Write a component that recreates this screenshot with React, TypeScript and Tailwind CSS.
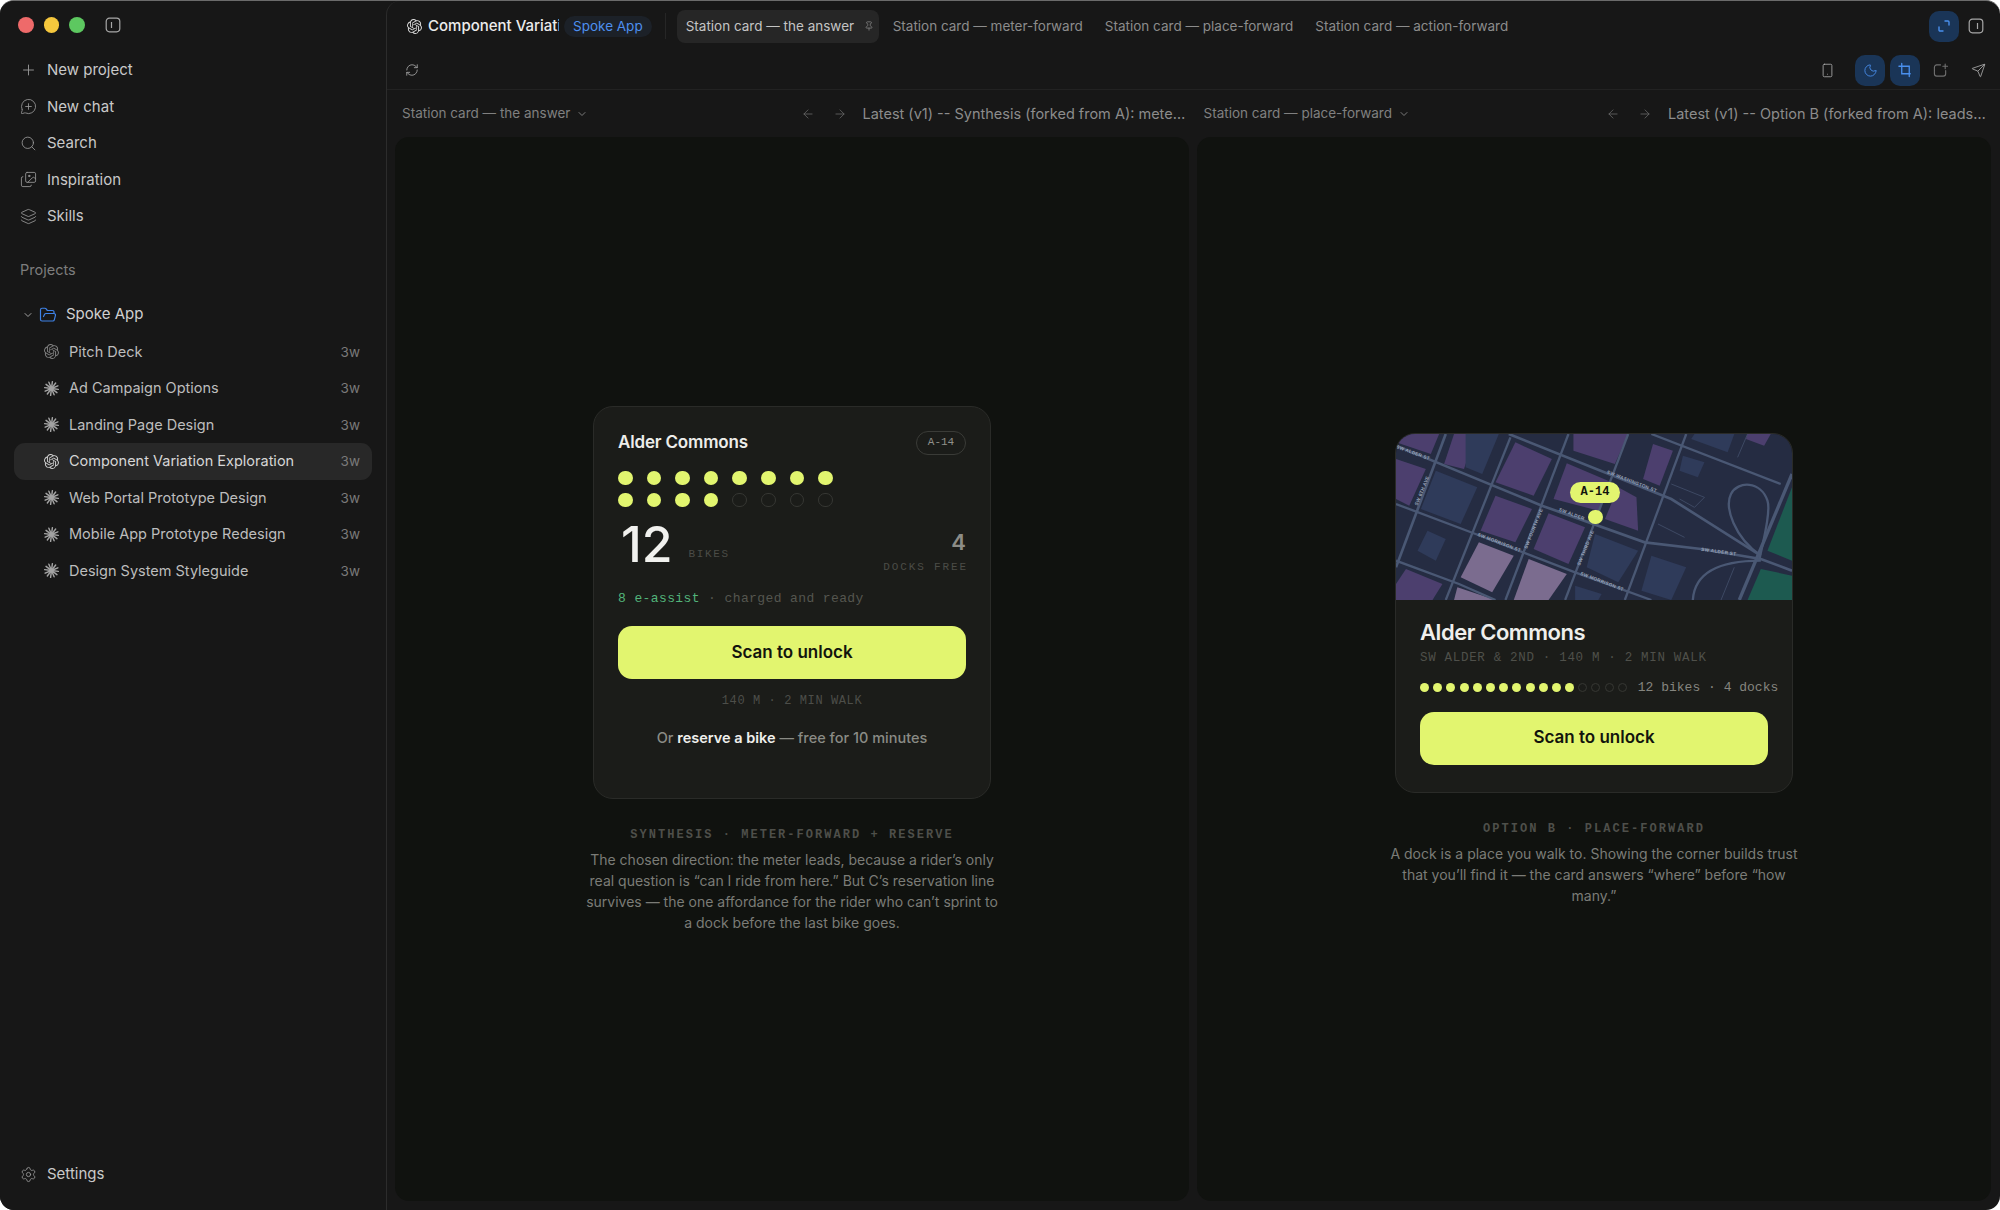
import React from "react";
import { Plus, MessageCirclePlus, Search, Settings, ChevronDown, FolderOpen, ArrowLeft, ArrowRight, RefreshCw, Pin, Smartphone, Moon, Send, Images, Layers } from "lucide-react";
import { SiOpenai } from "react-icons/si";

const Burst = () => (
  <svg width="15" height="15" viewBox="0 0 24 24" stroke="#a3a3a3" strokeWidth="2.3" strokeLinecap="round" className="shrink-0">
    {Array.from({ length: 12 }).map((_, i) => {
      const a = (i * Math.PI) / 6 + 0.13;
      return <line key={i} x1={12 + 3 * Math.cos(a)} y1={12 + 3 * Math.sin(a)} x2={12 + 11 * Math.cos(a)} y2={12 + 11 * Math.sin(a)} />;
    })}
    <circle cx="12" cy="12" r="3.5" fill="#a3a3a3" stroke="none" />
  </svg>
);

const PanelIcon = ({ right = false }: { right?: boolean }) => (
  <svg width="16" height="16" viewBox="0 0 16 16" fill="none" stroke="#a8a8a8" strokeWidth="1.2" className="shrink-0">
    <rect x="1.2" y="1.2" width="13.6" height="13.6" rx="3.2" />
    <line x1={right ? 9.5 : 6.5} y1="5" x2={right ? 9.5 : 6.5} y2="11" />
  </svg>
);

const top = [
  { label: "New project", icon: <Plus size={18} strokeWidth={1.3} /> },
  { label: "New chat", icon: <MessageCirclePlus size={17} strokeWidth={1.2} /> },
  { label: "Search", icon: <Search size={17} strokeWidth={1.2} /> },
  { label: "Inspiration", icon: <Images size={17} strokeWidth={1.2} /> },
  { label: "Skills", icon: <Layers size={17} strokeWidth={1.2} /> },
];

const projects = [
  ["Pitch Deck", "o"],
  ["Ad Campaign Options", "b"],
  ["Landing Page Design", "b"],
  ["Component Variation Exploration", "a"],
  ["Web Portal Prototype Design", "b"],
  ["Mobile App Prototype Redesign", "b"],
  ["Design System Styleguide", "b"],
];

const Sidebar = () => (
  <aside className="w-[386px] shrink-0 h-full flex flex-col bg-[#171717] text-[15px]">
    <div className="h-[48px] flex items-center pl-[18px] shrink-0">
      <span className="w-[15.5px] h-[15.5px] rounded-full bg-[#ee6a6a]" />
      <span className="w-[15.5px] h-[15.5px] rounded-full bg-[#f5c73d] ml-[10px]" />
      <span className="w-[15.5px] h-[15.5px] rounded-full bg-[#5dc860] ml-[10px]" />
      <span className="ml-[20px]"><PanelIcon /></span>
    </div>
    <nav className="flex flex-col pt-[3px] pl-[20px]">
      {top.map((t) => (
        <div key={t.label} className="h-[36.5px] flex items-center gap-[10px] text-[#c9c9c9]">
          <span className="w-[17px] flex justify-center text-[#9a9a9a]">{t.icon}</span>
          <span>{t.label}</span>
        </div>
      ))}
    </nav>
    <div className="pl-[20px] mt-[25px] h-[20px] flex items-center text-[14.5px] text-[#7d7d7d]">Projects</div>
    <div className="flex items-center h-[36px] mt-[17px] pl-[22px] text-[#d0d0d0]">
      <ChevronDown size={12} className="text-[#a0a0a0]" />
      <FolderOpen size={18} strokeWidth={1.6} className="text-[#3f82e6] ml-[5px]" />
      <span className="ml-[9px]">Spoke App</span>
    </div>
    <div className="flex flex-col px-[14px] mt-[1px]">
      {projects.map(([name, kind]) => (
        <div key={name} className={`h-[36.5px] flex items-center rounded-[11px] pl-[30px] pr-[12px] ${kind === "a" ? "bg-[#282828] text-[#d6d6d6]" : "text-[#bdbdbd]"}`}>
          <span className="w-[15px] shrink-0 flex justify-center">
            {kind === "b" ? <Burst /> : <SiOpenai size={15} className={kind === "a" ? "text-[#cfcfcf]" : "text-[#7f7f7f]"} />}
          </span>
          <span className="ml-[10px] flex-1 text-[14.5px] truncate">{name}</span>
          <span className="text-[13.5px] text-[#7a7a7a]">3w</span>
        </div>
      ))}
    </div>
    <div className="mt-auto pl-[20px] pb-[18px]">
      <div className="h-[36px] flex items-center gap-[10px] text-[#c9c9c9]">
        <Settings size={17} strokeWidth={1.2} className="text-[#9a9a9a]" />
        <span>Settings</span>
      </div>
    </div>
  </aside>
);

const ToolBtn = ({ children, on = false }: { children: React.ReactNode; on?: boolean }) => (
  <span className={`h-[31px] w-[30px] rounded-[10px] flex items-center justify-center ${on ? "bg-[#1a3557] text-[#4a90ee]" : "text-[#a0a0a0]"}`}>{children}</span>
);

const TabBar = () => (
  <div className="h-[50px] shrink-0 flex items-center pl-[20px] pr-[16px]">
    <SiOpenai size={15} className="text-[#d8d8d8] shrink-0" />
    <span className="ml-[6px] w-[131px] overflow-hidden whitespace-nowrap text-[15px] font-medium text-[#ececec]">Component Variation Exploration</span>
    <span className="ml-[5px] h-[21px] px-[9px] rounded-full bg-[#1c2128] text-[#4d8fee] text-[13.5px] flex items-center">Spoke App</span>
    <span className="ml-[13px] w-px h-[26px] bg-[#262626]" />
    <div className="ml-[11px] h-[33px] w-[202px] rounded-[8px] bg-[#262626] flex items-center pl-[9px] text-[13.5px] text-[#c4c4c4]">
      <span>Station card — the answer</span>
      <Pin size={10} className="ml-[10px] text-[#7f7f7f]" />
    </div>
    <span className="ml-[14px] text-[13.5px] text-[#8c8c8c]">Station card — meter-forward</span>
    <span className="ml-[22px] text-[13.5px] text-[#8c8c8c]">Station card — place-forward</span>
    <span className="ml-[22px] text-[13.5px] text-[#8c8c8c]">Station card — action-forward</span>
    <div className="ml-auto flex items-center gap-[9px]">
      <ToolBtn on>
        <svg width="14" height="14" viewBox="0 0 14 14" fill="none" stroke="currentColor" strokeWidth="1.4" strokeLinecap="round"><path d="M8 2h3a1 1 0 0 1 1 1v3" /><path d="M6 12H3a1 1 0 0 1-1-1V8" /></svg>
      </ToolBtn>
      <PanelIcon right />
    </div>
  </div>
);

const Toolbar = () => (
  <div className="h-[39px] shrink-0 flex items-center pl-[18px] pr-[14px] border-b border-[#222222]">
    <RefreshCw size={14} strokeWidth={1.4} className="text-[#aaaaaa]" />
    <div className="ml-auto flex items-center gap-[5px]">
      <span className="mr-[15px]"><Smartphone size={15} strokeWidth={1.3} className="text-[#b0b0b0]" /></span>
      <ToolBtn on><Moon size={15} strokeWidth={1.4} /></ToolBtn>
      <ToolBtn on>
        <svg width="15" height="16" viewBox="0 0 16 16" fill="none" stroke="currentColor" strokeWidth="1.4" strokeLinecap="round"><path d="M4 1v11h9" /><path d="M1 4h11v11" /></svg>
      </ToolBtn>
      <span className="w-[30px] flex justify-center text-[#6f6f6f]">
        <svg width="15" height="15" viewBox="0 0 16 16" fill="none" stroke="currentColor" strokeWidth="1.2" strokeLinecap="round"><path d="M8 2H4a2.5 2.5 0 0 0-2.5 2.5v7A2.5 2.5 0 0 0 4 14h7a2.5 2.5 0 0 0 2.5-2.5V8" /><path d="M13 1v5M10.5 3.5h5" /></svg>
      </span>
      <span className="w-[26px] flex justify-end text-[#b0b0b0]">
        <Send size={15} strokeWidth={1.3} />
      </span>
    </div>
  </div>
);

const PanelHead = ({ name, latest, wide }: { name: string; latest: string; wide: string }) => (
  <div className="flex items-center min-w-0 text-[13.5px] text-[#808080]">
    <span className="whitespace-nowrap">{name}</span>
    <ChevronDown size={12} className="ml-[6px] text-[#7a7a7a]" />
    <ArrowLeft size={14} strokeWidth={1.3} className="ml-auto text-[#6c6c6c]" />
    <ArrowRight size={14} strokeWidth={1.3} className="ml-[18px] text-[#6c6c6c]" />
    <span className={`ml-[16px] truncate text-[14.5px] text-[#8c8c8c] ${wide}`}>{latest}</span>
  </div>
);

const mono = "font-['Liberation_Mono',monospace]";
const lime = "bg-[#e2f56f]";

const Dot = ({ on, size }: { on: boolean; size: string }) =>
  <span className={`${size} rounded-full shrink-0 ${on ? lime : "border border-[#363733]"}`} />;

const Cta = () => (
  <div className={`h-[53px] rounded-[14px] ${lime} flex items-center justify-center text-[17px] font-semibold text-[#12140d]`}>Scan to unlock</div>
);

const CardOne = () => (
  <div className="w-[398px] h-[393px] rounded-[20px] bg-[#1b1c19] border border-[#2a2b28] px-[24px] pt-[24px] flex flex-col">
    <div className="flex items-center justify-between h-[24px]">
      <span className="text-[17px] font-semibold text-[#ededea] tracking-[-0.01em]">Alder Commons</span>
      <span className={`${mono} h-[24px] w-[50px] rounded-full border border-[#3a3b37] text-[11px] text-[#90908a] flex items-center justify-center`}>A-14</span>
    </div>
    <div className="mt-[16px] grid grid-cols-[repeat(8,14.6px)] gap-x-[14px] gap-y-[7.6px]">
      {Array.from({ length: 16 }).map((_, i) => <Dot key={i} on={i < 12} size="w-[14.6px] h-[14.6px]" />)}
    </div>
    <div className="mt-[7px] flex items-end justify-between">
      <div className="flex items-end">
        <span className="pl-[3px] text-[50px] leading-[60px] font-medium text-[#f1f1ee]">12</span>
        <span className={`${mono} ml-[16px] mb-[12px] text-[11px] tracking-[0.15em] text-[#4b4c47]`}>BIKES</span>
      </div>
      <div className="flex flex-col items-end">
        <span className="text-[22px] leading-[26px] font-semibold text-[#8c8c87]">4</span>
        <span className={`${mono} mt-[5px] text-[11px] leading-[14px] tracking-[0.17em] mr-[-2px] text-[#4b4c47]`}>DOCKS FREE</span>
      </div>
    </div>
    <div className={`${mono} mt-[16px] text-[13px] leading-[18px] tracking-[0.03em] text-[#55564f]`}>
      <span className="text-[#52b47a] font-medium">8 e-assist</span> · charged and ready
    </div>
    <div className="mt-[18px]"><Cta /></div>
    <div className={`${mono} mt-[14px] text-center text-[12px] leading-[16px] tracking-[0.05em] text-[#4d4e49]`}>140 M · 2 MIN WALK</div>
    <div className="mt-[19px] text-center text-[14.5px] leading-[20px] font-medium text-[#8a8b85]">
      Or <span className="text-[#efefec] font-semibold">reserve a bike</span> — free for 10 minutes
    </div>
  </div>
);

const St = ({ d, w = 7 }: { d: string; w?: number }) => <path d={d} fill="none" stroke="#4a5874" strokeWidth={w} />;
const Poly = ({ p, c }: { p: string; c: string }) => <polygon points={p} fill={c} />;
const L = ({ x, y, r, t }: { x: number; y: number; r: number; t: string }) => (
  <text x={x} y={y} transform={`rotate(${r} ${x} ${y})`} fontSize="14" fontWeight="700" fontFamily="'Liberation Sans',sans-serif" fill="#98a3b8" letterSpacing="1">{t}</text>
);

const MapArt = () => (
  <svg viewBox="30 20 1194 498" preserveAspectRatio="none" className="block w-full h-[166px]">
    <rect x="30" y="20" width="1194" height="498" fill="#252c42" />
    {["30,20 160,20 135,80 30,45","30,95 120,125 70,235 30,215","205,20 270,20 235,125 175,110","390,45 500,95 445,205 330,165","565,20 730,20 690,110 565,70","545,108 680,165 640,250 505,215","330,205 440,245 390,345 285,310","490,258 600,300 550,410 445,365","700,180 755,210 760,310 660,275","805,50 865,70 825,175 775,155","1090,20 1160,20 1140,55 1085,35","60,425 170,470 140,518 30,518 30,470"].map((p) => <Poly key={p} p={p} c="#4c3f6e" />)}
    {["280,345 385,385 320,495 225,450","430,395 545,440 490,518 385,518","215,480 330,518 205,518"].map((p) => <Poly key={p} p={p} c="#7b6c8f" />)}
    {["150,130 275,180 225,290 105,245","240,20 340,20 290,140 240,120","125,310 180,335 150,400 95,370","630,320 760,370 700,465 605,420","800,385 905,420 860,518 770,490","930,20 1050,20 1030,75 920,35","895,85 960,105 940,150 885,130","570,475 650,500 640,518 570,518"].map((p) => <Poly key={p} p={p} c="#2f3b5a" />)}
    <Poly p="1224,180 1224,400 1150,370" c="#1d5a50" />
    <Poly p="1130,425 1224,445 1224,518 1090,518" c="#1d5a50" />
    <St d="M30,55 L470,235 L780,345 L950,365 L1130,395 L1224,430" w={8} />
    <St d="M370,20 L860,215 L1130,385" w={8} />
    <St d="M800,20 L1190,170" />
    <St d="M30,230 L270,320 L570,435 L800,518" />
    <St d="M30,400 L220,470 L330,518" />
    <St d="M180,20 L30,420" w={8} />
    <St d="M375,30 L180,518" />
    <St d="M550,20 L360,518" />
    <St d="M730,20 L540,518" />
    <St d="M905,20 L720,518" />
    <St d="M1224,140 L1065,518" w={10} />
    <St d="M1130,385 C1050,330 1020,240 1040,200 C1060,160 1130,160 1150,220 C1160,250 1140,330 1125,400" />
    <St d="M1130,400 C1000,400 930,440 925,518" />
    <St d="M860,170 L960,210 L930,240 L885,215 M1060,90 L1090,20 M820,290 L900,330 M1050,420 L1010,518" w={2} />
    <L x={30} y={62} r={20} t="SW ALDER ST" />
    <L x={95} y={235} r={-68} t="SW 6TH AVE" />
    <L x={665} y={138} r={21} t="SW WASHINGTON ST" />
    <L x={520} y={250} r={21} t="SW ALDER" />
    <L x={950} y={370} r={8} t="SW ALDER ST" />
    <L x={275} y={325} r={21} t="SW MORRISON ST" />
    <L x={585} y={442} r={21} t="SW MORRISON ST" />
    <L x={425} y={365} r={-68} t="SW FOURTH AVE" />
    <L x={585} y={415} r={-68} t="SW THIRD AVE" />
  </svg>
);

const CardTwo = () => (
  <div className="w-[398px] rounded-[20px] overflow-hidden bg-[#1b1c19] border border-[#2a2b28]">
    <div className="relative">
      <MapArt />
      <span className={`${mono} absolute left-[174px] top-[48px] h-[21px] w-[50px] rounded-full ${lime} text-[12px] font-bold text-[#12140d] flex items-center justify-center`}>A-14</span>
      <span className={`absolute left-[192px] top-[76px] w-[14.5px] h-[14.5px] rounded-full ${lime}`} />
    </div>
    <div className="px-[24px] pt-[17px] h-[192px]">
      <div className="text-[22px] leading-[30px] font-semibold tracking-[-0.02em] text-[#efefec]">Alder Commons</div>
      <div className={`${mono} mt-[2px] text-[12.5px] leading-[18px] tracking-[0.055em] text-[#4f504a] whitespace-nowrap`}>SW ALDER &amp; 2ND · 140 M · 2 MIN WALK</div>
      <div className="mt-[12px] flex items-center">
        <div className="flex gap-[4.2px]">
          {Array.from({ length: 16 }).map((_, i) => <Dot key={i} on={i < 12} size="w-[9px] h-[9px]" />)}
        </div>
        <span className={`${mono} ml-[11px] text-[13px] leading-[18px] text-[#85857f] whitespace-nowrap`}>12 bikes · 4 docks</span>
      </div>
      <div className="mt-[15px]"><Cta /></div>
    </div>
  </div>
);

const Caption = ({ tag, text }: { tag: string; text: string }) => (
  <div className="w-[420px] text-center">
    <div className={`${mono} text-[12px] leading-[16px] font-bold tracking-[0.17em] text-[#4e4f4a]`}>{tag}</div>
    <p className="mt-[6px] text-[14px] leading-[21px] text-[#7b7c77]">{text}</p>
  </div>
);

const Panel = ({ children }: { children: React.ReactNode }) => (
  <div className="rounded-[14px] bg-[#10120f] flex flex-col items-center justify-center min-w-0">{children}</div>
);

export default function App() {
  return (
    <div className="w-[2000px] h-[1210px] bg-white overflow-hidden font-['Inter',sans-serif]">
      <div className="w-full h-full flex bg-[#171717] rounded-[14px] overflow-hidden border-t border-[#6b6b6b]">
        <Sidebar />
        <main className="flex-1 min-w-0 flex flex-col border-l border-[#2c2c2c] rounded-tl-[14px]">
          <TabBar />
          <Toolbar />
          <div className="h-[47px] shrink-0 grid grid-cols-2 items-center pl-[15px] pr-[12px] gap-x-[17px]">
            <PanelHead name="Station card — the answer" latest="Latest (v1) -- Synthesis (forked from A): meter-forward plus reservation" wide="w-[324px]" />
            <PanelHead name="Station card — place-forward" latest="Latest (v1) -- Option B (forked from A): leads with the map" wide="w-[320px]" />
          </div>
          <div className="flex-1 min-h-0 grid grid-cols-2 gap-x-[8px] pl-[8px] pr-[9px] pb-[9px]">
            <Panel>
              <CardOne />
              <div className="mt-[28px]">
                <Caption tag="SYNTHESIS · METER-FORWARD + RESERVE" text="The chosen direction: the meter leads, because a rider’s only real question is “can I ride from here.” But C’s reservation line survives — the one affordance for the rider who can’t sprint to a dock before the last bike goes." />
              </div>
            </Panel>
            <Panel>
              <CardTwo />
              <div className="mt-[28px]">
                <Caption tag="OPTION B · PLACE-FORWARD" text="A dock is a place you walk to. Showing the corner builds trust that you’ll find it — the card answers “where” before “how many.”" />
              </div>
            </Panel>
          </div>
        </main>
      </div>
    </div>
  );
}
